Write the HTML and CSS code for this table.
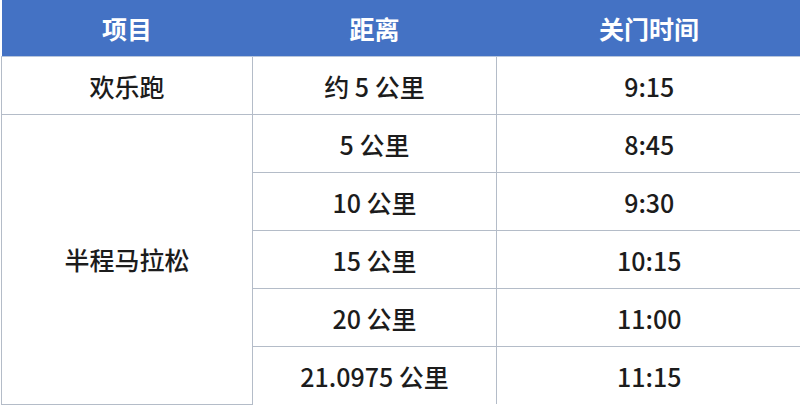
FILE: index.html
```html
<!DOCTYPE html>
<html lang="zh-CN">
<head>
<meta charset="utf-8">
<link rel="stylesheet" href="styles.css">
</head>
<body>
<table class="schedule">
  <colgroup>
    <col class="c1"><col class="c2"><col class="c3">
  </colgroup>
  <thead>
    <tr><th>项目</th><th>距离</th><th>关门时间</th></tr>
  </thead>
  <tbody>
    <tr><td>欢乐跑</td><td>约 5 公里</td><td>9:15</td></tr>
    <tr><td rowspan="6">半程马拉松</td><td>5 公里</td><td>8:45</td></tr>
    <tr><td>10 公里</td><td>9:30</td></tr>
    <tr><td>15 公里</td><td>10:15</td></tr>
    <tr><td>20 公里</td><td>11:00</td></tr>
    <tr class="last"><td>21.0975 公里</td><td>11:15</td></tr>
  </tbody>
</table>
</body>
</html>
```
FILE: styles.css
```css
html, body {
  margin: 0;
  padding: 0;
  background: #ffffff;
}
body {
  width: 800px;
  height: 407px;
  overflow: hidden;
  font-family: "Noto Sans CJK SC", "Noto Sans", sans-serif;
}
.schedule {
  border-collapse: collapse;
  table-layout: fixed;
  width: 800px;
  margin-left: 1px;
}
.c1 { width: 251px; }
.c2 { width: 244px; }
.c3 { width: 305px; }
.schedule th {
  background: #4472c4;
  color: #ffffff;
  font-weight: 700;
  font-size: 25px;
  height: 56px;
  padding: 0;
  text-align: center;
  vertical-align: middle;
  border-bottom: 1px solid #b8c6dc;
}
.schedule td {
  height: 57px;
  padding: 0;
  text-align: center;
  vertical-align: middle;
  font-size: 25px;
  font-weight: 500;
  color: #1c1c1c;
  border: 1px solid #b4bcc8;
  border-top: 0;
}
.schedule tr td:last-child {
  border-right: 0;
}
.schedule tr.last td {
  border-bottom: 0;
}
```
